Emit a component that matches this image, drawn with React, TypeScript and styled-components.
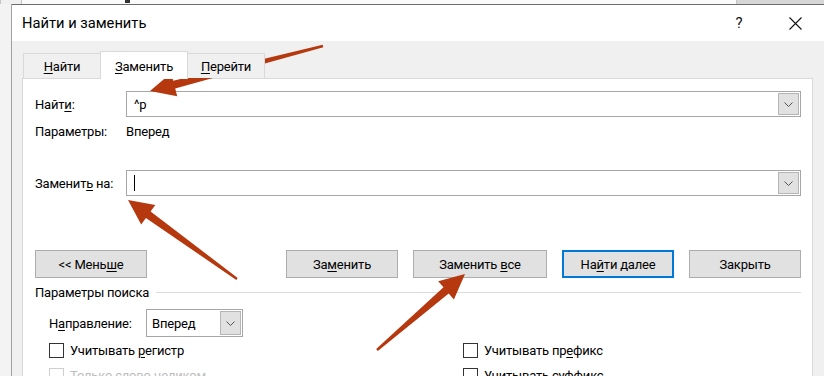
import React from 'react';
import styled, { createGlobalStyle } from 'styled-components';

const Global = createGlobalStyle`
  html, body { margin: 0; padding: 0; }
  body {
    width: 824px; height: 376px; overflow: hidden; background: #f0f0f0;
    font-family: Roboto, "Noto Sans", sans-serif; font-size: 13px; letter-spacing: -0.2px; color: #000;
  }
`;

const Page = styled.div`
  position: relative; width: 824px; height: 376px; overflow: hidden;
  display: flex; flex-direction: column;
`;

const TopStrip = styled.div`
  height: 4px; display: flex; flex-shrink: 0;
`;

const StripSeg = styled.div<{ $w?: number; $bg: string }>`
  ${(p) => (p.$w ? `width: ${p.$w}px;` : 'flex: 1;')}
  background: ${(p) => p.$bg};
  border-left: 1px solid #c4c4c4;
  position: relative;
`;

const StripGlyph = styled.span`
  position: absolute; left: 103px; top: 0; width: 5px; height: 3px; background: #333;
`;

const Main = styled.div`
  flex: 1; display: flex; min-height: 0;
`;

const LeftStrip = styled.div`
  width: 11px; background: #f3f3f3; border-right: 1px solid #a0a0a0; flex-shrink: 0;
`;

const Dialog = styled.div`
  flex: 1; display: flex; flex-direction: column; min-width: 0;
  background: #f0f0f0; border-top: 1px solid #6c6c6c;
`;

const TitleBar = styled.div`
  height: 36px; flex-shrink: 0; background: #fff;
  display: flex; align-items: center; padding-left: 10px;
`;

const Title = styled.div`
  flex: 1; font-size: 14.7px; letter-spacing: 0; color: #000; padding-bottom: 1px;
`;

const TitleBtn = styled.div<{ $w: number }>`
  width: ${(p) => p.$w}px; height: 36px;
  display: flex; align-items: center; justify-content: center;
  font-size: 15px; color: #111;
`;

const Body = styled.div`
  flex: 1; display: flex; flex-direction: column; min-height: 0;
  padding: 10px 11px 0 10px;
`;

const TabStrip = styled.div`
  display: flex; align-items: flex-end; padding-left: 1px;
  position: relative; z-index: 1; margin-bottom: -1px; height: 28px;
`;

const Tab = styled.div<{ $w: number; $active?: boolean }>`
  box-sizing: border-box; width: ${(p) => p.$w}px;
  height: ${(p) => (p.$active ? 28 : 25)}px;
  margin-bottom: ${(p) => (p.$active ? 0 : 1)}px;
  margin-left: -1px;
  background: ${(p) => (p.$active ? '#fff' : '#f0f0f0')};
  border: 1px solid #d9d9d9; border-bottom: none;
  display: flex; align-items: center; justify-content: center;
  padding-top: ${(p) => (p.$active ? 2 : 0)}px;
  position: relative; z-index: ${(p) => (p.$active ? 2 : 1)};
  &:first-child { margin-left: 0; }
`;

const Panel = styled.div`
  flex: 1; background: #fff; border: 1px solid #d9d9d9; border-bottom: none;
  padding: 12px 11px 0 12px; display: flex; flex-direction: column;
`;

const FieldRow = styled.div<{ $mt?: number }>`
  display: flex; align-items: center; margin-top: ${(p) => p.$mt ?? 0}px;
`;

const Label = styled.div<{ $w: number }>`
  width: ${(p) => p.$w}px; flex-shrink: 0; white-space: nowrap;
`;

const Combo = styled.div<{ $w?: number; $h?: number }>`
  box-sizing: border-box; ${(p) => (p.$w ? `width: ${p.$w}px;` : 'flex: 1;')}
  height: ${(p) => p.$h ?? 26}px;
  border: 1px solid #a6a6a6; background: #fff;
  display: flex; align-items: stretch;
`;

const ComboText = styled.div<{ $pl?: number }>`
  flex: 1; display: flex; align-items: center; padding-left: ${(p) => p.$pl ?? 7}px;
  white-space: nowrap;
`;

const Caret = styled.span`
  display: inline-block; width: 1px; height: 16px; background: #000;
`;

const DropBtn = styled.div`
  width: 19px; margin: 1px; background: #e1e1e1; border: 1px solid #b5b5b5;
  display: flex; align-items: center; justify-content: center;
`;

const ParamRow = styled.div`
  display: flex; align-items: center; height: 20px; margin-top: 4px;
`;

const ButtonRow = styled.div`
  display: flex; align-items: center; margin-top: 54px; height: 28px;
`;

const Spacer = styled.div` flex: 1; `;

const ButtonGroup = styled.div` display: flex; gap: 15px; `;

const Button = styled.div<{ $w: number; $default?: boolean }>`
  box-sizing: border-box; width: ${(p) => p.$w}px; height: 28px;
  background: #e1e1e1;
  border: ${(p) => (p.$default ? '2px solid #0078d7' : '1px solid #adadad')};
  display: flex; align-items: center; justify-content: center; white-space: nowrap;
`;

const GroupHeader = styled.div`
  display: flex; align-items: center; gap: 7px; height: 18px; margin-top: 5px;
`;

const GroupLine = styled.div` flex: 1; height: 1px; background: #dcdcdc; `;

const DirRow = styled.div`
  display: flex; align-items: center; margin-top: 8px; padding-left: 14px;
`;

const CheckGrid = styled.div`
  display: grid; grid-template-columns: 414px 1fr; grid-auto-rows: 25px;
  padding-left: 14px; margin-top: 1px;
`;

const CheckItem = styled.div<{ $disabled?: boolean }>`
  display: flex; align-items: center; gap: 6px; white-space: nowrap;
  color: ${(p) => (p.$disabled ? '#bdbdbd' : '#000')};
`;

const Box = styled.span<{ $disabled?: boolean }>`
  box-sizing: border-box; width: 15px; height: 15px; flex-shrink: 0;
  border: 1px solid ${(p) => (p.$disabled ? '#cfcfcf' : '#333')}; background: #fff;
`;

const U = styled.span`
  text-decoration: underline; text-underline-offset: 2px; text-decoration-thickness: 1px;
`;

const Overlay = styled.svg`
  position: absolute; left: 0; top: 0; pointer-events: none;
`;

const Chevron = () => (
  <svg width="9" height="5" viewBox="0 0 9 5">
    <path d="M0.5 0.5 L4.5 4.5 L8.5 0.5" fill="none" stroke="#555" strokeWidth="1" />
  </svg>
);

const CloseIcon = () => (
  <svg width="13" height="13" viewBox="0 0 13 13">
    <path d="M0.5 0.5 L12.5 12.5 M12.5 0.5 L0.5 12.5" stroke="#111" strokeWidth="1.1" />
  </svg>
);

type Pt = [number, number];
function arrowPoints(t: Pt, p: Pt, w0: number, w1: number, hw: number, hl: number) {
  const dx = p[0] - t[0];
  const dy = p[1] - t[1];
  const len = Math.hypot(dx, dy);
  const d: Pt = [dx / len, dy / len];
  const n: Pt = [-d[1], d[0]];
  const nk: Pt = [p[0] - d[0] * hl, p[1] - d[1] * hl];
  const pts: Pt[] = [
    [t[0] + n[0] * w0 / 2, t[1] + n[1] * w0 / 2],
    [nk[0] + n[0] * w1 / 2, nk[1] + n[1] * w1 / 2],
    [nk[0] + n[0] * hw / 2, nk[1] + n[1] * hw / 2],
    p,
    [nk[0] - n[0] * hw / 2, nk[1] - n[1] * hw / 2],
    [nk[0] - n[0] * w1 / 2, nk[1] - n[1] * w1 / 2],
    [t[0] - n[0] * w0 / 2, t[1] - n[1] * w0 / 2],
  ];
  return pts.map((q) => `${q[0].toFixed(1)},${q[1].toFixed(1)}`).join(' ');
}

const arrows: { t: Pt; p: Pt }[] = [
  { t: [323, 46], p: [150, 91] },
  { t: [237, 279], p: [128, 200] },
  { t: [377, 350], p: [465, 274] },
];

export default function App() {
  return (
    <>
      <Global />
      <Page>
        <TopStrip>
          <StripSeg $w={20} $bg="#f0f0f0" />
          <StripSeg $bg="#fbfbfb"><StripGlyph /></StripSeg>
          <StripSeg $w={87} $bg="#d6d6d6" />
        </TopStrip>
        <Main>
          <LeftStrip />
          <Dialog>
            <TitleBar>
              <Title>Найти и заменить</Title>
              <TitleBtn $w={54}>?</TitleBtn>
              <TitleBtn $w={58}><CloseIcon /></TitleBtn>
            </TitleBar>
            <Body>
              <TabStrip>
                <Tab $w={78}><span><U>Н</U>айти</span></Tab>
                <Tab $w={88} $active><span><U>З</U>аменить</span></Tab>
                <Tab $w={78}><span><U>П</U>ерейти</span></Tab>
              </TabStrip>
              <Panel>
                <FieldRow>
                  <Label $w={91}>Найт<U>и</U>:</Label>
                  <Combo>
                    <ComboText>^p</ComboText>
                    <DropBtn><Chevron /></DropBtn>
                  </Combo>
                </FieldRow>
                <ParamRow>
                  <Label $w={91}>Параметры:</Label>
                  <span>Вперед</span>
                </ParamRow>
                <FieldRow $mt={29}>
                  <Label $w={91}>Заменит<U>ь</U> на:</Label>
                  <Combo>
                    <ComboText><Caret /></ComboText>
                    <DropBtn><Chevron /></DropBtn>
                  </Combo>
                </FieldRow>
                <ButtonRow>
                  <Button $w={112}><span>&lt;&lt; Мень<U>ш</U>е</span></Button>
                  <Spacer />
                  <ButtonGroup>
                    <Button $w={112}><span>За<U>м</U>енить</span></Button>
                    <Button $w={134}><span>Заменить <U>в</U>се</span></Button>
                    <Button $w={112} $default><span>На<U>й</U>ти далее</span></Button>
                    <Button $w={112}><span>Закрыть</span></Button>
                  </ButtonGroup>
                </ButtonRow>
                <GroupHeader>
                  <span>Параметры поиска</span>
                  <GroupLine />
                </GroupHeader>
                <DirRow>
                  <Label $w={97}>Н<U>а</U>правление:</Label>
                  <Combo $w={97} $h={28}>
                    <ComboText $pl={5}>Вперед</ComboText>
                    <DropBtn><Chevron /></DropBtn>
                  </Combo>
                </DirRow>
                <CheckGrid>
                  <CheckItem><Box /><span>Учитывать <U>р</U>егистр</span></CheckItem>
                  <CheckItem><Box /><span>Учитывать пр<U>е</U>фикс</span></CheckItem>
                  <CheckItem $disabled><Box $disabled /><span>Только слово целиком</span></CheckItem>
                  <CheckItem><Box /><span>Учитывать суффикс</span></CheckItem>
                </CheckGrid>
              </Panel>
            </Body>
          </Dialog>
        </Main>
        <Overlay width="824" height="376" viewBox="0 0 824 376">
          {arrows.map((a, i) => (
            <polygon key={i} points={arrowPoints(a.t, a.p, 2.5, 8, 24, 25)} fill="#b5380f" />
          ))}
        </Overlay>
      </Page>
    </>
  );
}
